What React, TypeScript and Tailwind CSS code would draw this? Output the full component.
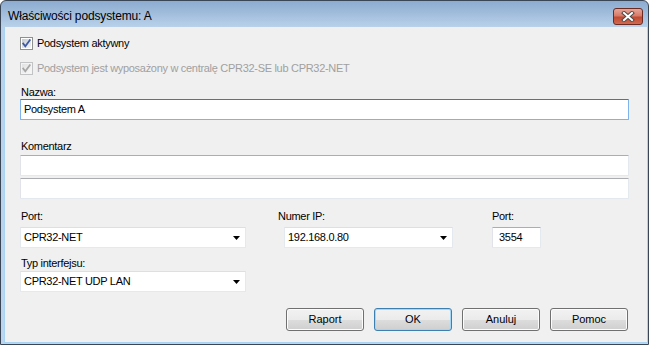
import { useState } from 'react';

const FONT = { fontFamily: '"Liberation Sans", Arial, sans-serif' };

function CheckMark({ disabled }: { disabled?: boolean }) {
  return (
    <svg width="9" height="9" viewBox="0 0 9 9" className="absolute left-[1px] top-[1px]">
      <path
        d="M1.2 4.6 L3.3 7.2 L7.8 1.2"
        fill="none"
        stroke={disabled ? '#a7a7a7' : '#3d5aa3'}
        strokeWidth="1.8"
        strokeLinecap="square"
      />
    </svg>
  );
}

function Checkbox({ label, checked, disabled }: { label: string; checked: boolean; disabled?: boolean }) {
  return (
    <label className="flex items-center h-[13px] gap-[4px]">
      <span
        className={
          disabled
            ? 'relative w-[13px] h-[13px] border border-[#c2c3c5] bg-[#f4f4f4] p-[1px]'
            : 'relative w-[13px] h-[13px] border border-[#8e8f8f] bg-white p-[1px]'
        }
      >
        <span
          className={
            disabled
              ? 'block w-full h-full bg-gradient-to-br from-[#e2e2e2] to-[#f7f7f7]'
              : 'block w-full h-full bg-gradient-to-br from-[#c5cbd2] to-[#f4f5f6]'
          }
        />
        {checked && <CheckMark disabled={disabled} />}
      </span>
      <span className={disabled ? 'text-[#a0a0a0]' : 'text-black'}>{label}</span>
    </label>
  );
}

function Label({ children, className = '' }: { children: string; className?: string }) {
  return <div className={`h-[13px] leading-[13px] ${className}`}>{children}</div>;
}

function TextBox({ value, focused, className = '' }: { value?: string; focused?: boolean; className?: string }) {
  return (
    <div
      className={
        (focused
          ? 'border border-[#7eb4ea] border-t-[#3d7bad] '
          : 'border border-[#e3e9ef] border-t-[#abadb3] border-l-[#e2e3ea] ') +
        `h-[21px] bg-white flex items-center rounded-[1px] ${className}`
      }
    >
      <span className="leading-[13px]">{value}</span>
    </div>
  );
}

function Combo({ value, className = '' }: { value: string; className?: string }) {
  return (
    <div
      className={`h-[21px] bg-white border border-[#e3e9ef] border-t-[#dcdfe5] flex items-center justify-between pl-[3px] pr-[5px] ${className}`}
    >
      <span className="leading-[13px]">{value}</span>
      <svg width="7" height="4" viewBox="0 0 7 4">
        <path d="M0 0 H7 L3.5 4 Z" fill="#000" />
      </svg>
    </div>
  );
}

function Button({ children, isDefault }: { children: string; isDefault?: boolean }) {
  return (
    <button
      className={
        (isDefault
          ? 'border-[#3c7fb1] shadow-[inset_0_0_0_1px_#a4d6f5] '
          : 'border-[#707070] shadow-[inset_0_0_0_1px_#fcfcfc] ') +
        'w-[78px] h-[23px] border rounded-[3px] bg-[linear-gradient(#f2f2f2_0%,#ebebeb_50%,#dddddd_51%,#cfcfcf_100%)] text-black leading-[13px]'
      }
    >
      {children}
    </button>
  );
}

export default function App() {
  const [active] = useState(true);

  return (
    <div className="w-[649px] h-[345px] bg-white" style={FONT}>
      <div className="w-full h-full flex flex-col border border-[#3a4656] rounded-t-[6px] bg-[linear-gradient(#8cabd0_0px,#b9d1ea_26px,#bcd6ef_100%)] overflow-hidden">
        <div className="h-[26px] flex items-center justify-between pl-[7px] pr-[5px]">
          <span className="text-[12px] tracking-[-0.15px] text-black pt-[3px]">Właściwości podsystemu: A</span>
          <button className="w-[30px] h-[17px] mt-[5px] rounded-[3px] border border-[#6b2a22] bg-[linear-gradient(#e6a598_0%,#d77b69_45%,#c24a33_55%,#cf6a50_100%)] flex items-center justify-center">
            <svg width="14" height="11" viewBox="0 0 14 11">
              <path d="M3 2 L11 9 M11 2 L3 9" stroke="#4b4b4b" strokeWidth="4" strokeLinecap="square" />
              <path d="M3 2 L11 9 M11 2 L3 9" stroke="#ffffff" strokeWidth="2" strokeLinecap="square" />
            </svg>
          </button>
        </div>

        <div className="flex-1 ml-[3px] mb-[1px] bg-[#f0f0f0] border-l border-r border-b border-[#a9d3f1] flex flex-col pl-[15px] pr-[18px] text-[11px] tracking-[-0.3px] text-black">
          <div className="mt-[10px]">
            <Checkbox label="Podsystem aktywny" checked={active} />
          </div>
          <div className="mt-[12px]">
            <Checkbox label="Podsystem jest wyposażony w centralę CPR32-SE lub CPR32-NET" checked disabled />
          </div>

          <Label className="mt-[11px] pl-[1px]">Nazwa:</Label>
          <TextBox value="Podsystem A" focused className="pl-[3px]" />

          <Label className="mt-[20px] pl-[1px]">Komentarz</Label>
          <TextBox className="mt-[2px]" />
          <TextBox className="mt-[2px]" />

          <div className="flex mt-[11px]">
            <div className="w-[226px] pl-[1px]">
              <Label>Port:</Label>
              <Combo value="CPR32-NET" className="mt-[4px] ml-[-1px]" />
            </div>
            <div className="ml-[32px] w-[175px]">
              <Label>Numer IP:</Label>
              <Combo value="192.168.0.80" className="mt-[4px] ml-[6px] w-[169px]" />
            </div>
            <div className="ml-[39px]">
              <Label>Port:</Label>
              <TextBox value="3554" className="mt-[4px] w-[49px] pl-[6px]" />
            </div>
          </div>

          <div className="mt-[9px] w-[226px] pl-[1px]">
            <Label>Typ interfejsu:</Label>
            <Combo value="CPR32-NET UDP LAN" className="mt-[1px] ml-[-1px]" />
          </div>

          <div className="mt-[16px] flex justify-end gap-[10px] pr-[1px] tracking-normal">
            <Button>Raport</Button>
            <Button isDefault>OK</Button>
            <Button>Anuluj</Button>
            <Button>Pomoc</Button>
          </div>
        </div>
      </div>
    </div>
  );
}
